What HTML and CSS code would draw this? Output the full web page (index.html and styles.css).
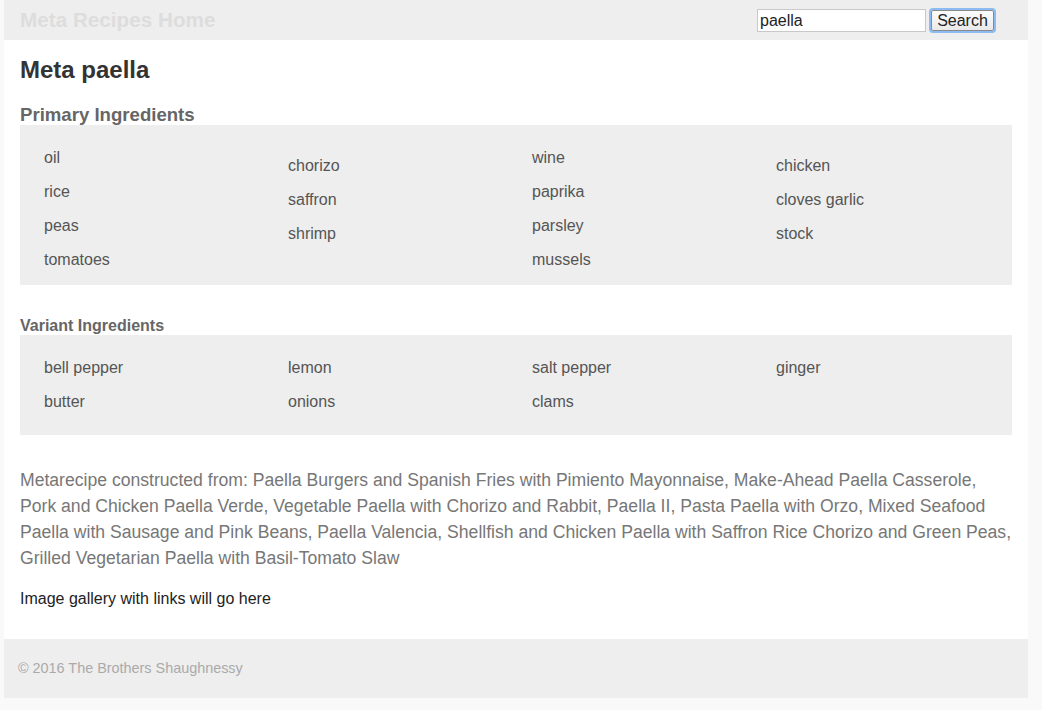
FILE: index.html
```html
<!DOCTYPE html>
<html lang="en">
<head>
<meta charset="utf-8">
<title>Meta paella</title>
<link rel="stylesheet" href="styles.css">
</head>
<body>
<div class="page">
  <header class="topbar">
    <a class="brand" href="#">Meta Recipes Home</a>
    <form class="search">
      <input class="search-input" type="text" value="paella">
      <button class="search-btn" type="button">Search</button>
    </form>
  </header>
  <main class="content">
    <h1 class="title">Meta paella</h1>
    <h2 class="section-primary">Primary Ingredients</h2>
    <div class="ingredients ingredients-primary">
      <ul class="col">
        <li>oil</li><li>rice</li><li>peas</li><li>tomatoes</li>
      </ul>
      <ul class="col col-offset">
        <li>chorizo</li><li>saffron</li><li>shrimp</li>
      </ul>
      <ul class="col">
        <li>wine</li><li>paprika</li><li>parsley</li><li>mussels</li>
      </ul>
      <ul class="col col-offset">
        <li>chicken</li><li>cloves garlic</li><li>stock</li>
      </ul>
    </div>
    <h3 class="section-variant">Variant Ingredients</h3>
    <div class="ingredients ingredients-variant">
      <ul class="col"><li>bell pepper</li><li>butter</li></ul>
      <ul class="col"><li>lemon</li><li>onions</li></ul>
      <ul class="col"><li>salt pepper</li><li>clams</li></ul>
      <ul class="col"><li>ginger</li></ul>
    </div>
    <p class="sources">Metarecipe constructed from: Paella Burgers and Spanish Fries with Pimiento Mayonnaise, Make-Ahead Paella Casserole, Pork and Chicken Paella Verde, Vegetable Paella with Chorizo and Rabbit, Paella II, Pasta Paella with Orzo, Mixed Seafood Paella with Sausage and Pink Beans, Paella Valencia, Shellfish and Chicken Paella with Saffron Rice Chorizo and Green Peas, Grilled Vegetarian Paella with Basil-Tomato Slaw</p>
    <p class="gallery">Image gallery with links will go here</p>
  </main>
  <footer class="footer">© 2016 The Brothers Shaughnessy</footer>
</div>
</body>
</html>
```
FILE: styles.css
```css
html, body {
  margin: 0;
  padding: 0;
}
body {
  background: #f9f9f9;
  font-family: "Liberation Sans", Arial, Helvetica, sans-serif;
  padding-bottom: 12px;
}
.page {
  width: 1024px;
  margin-left: 4px;
  background: #fff;
}
.topbar {
  height: 40px;
  background: #eee;
  display: flex;
  align-items: center;
  justify-content: space-between;
  padding: 0 16px;
}
.brand {
  font-size: 20.7px;
  font-weight: bold;
  color: #ddd;
  text-decoration: none;
  line-height: 24px;
}
.search {
  display: flex;
  align-items: center;
  margin: 0 18px 0 0;
}
.search-input {
  box-sizing: border-box;
  width: 169px;
  height: 23px;
  border: 1px solid #c8c8c8;
  padding: 0 2px;
  margin: 1px 0 0 0;
  font-family: "Liberation Sans", Arial, sans-serif;
  font-size: 16px;
  color: #222;
  background: #fff;
}
.search-btn {
  box-sizing: border-box;
  margin-left: 5px;
  width: 63px;
  height: 21px;
  padding: 0;
  border: 1px solid #8a8a8a;
  border-radius: 2px;
  background: linear-gradient(#fcfcfc, #e9e9e9);
  box-shadow: 0 0 0 2px #8bbbf2;
  font-family: "Liberation Sans", Arial, sans-serif;
  font-size: 16px;
  line-height: 19px;
  color: #222;
}
.content {
  padding: 16px 16px 30px;
}
.title {
  margin: 0;
  font-size: 24px;
  line-height: 28px;
  font-weight: bold;
  color: #333;
}
.section-primary {
  margin: 20px 0 0;
  font-size: 18.6px;
  line-height: 21px;
  font-weight: bold;
  color: #666;
}
.section-variant {
  margin: 31px 0 0;
  font-size: 16px;
  line-height: 19px;
  font-weight: bold;
  color: #666;
}
.ingredients {
  background: #eee;
  display: grid;
  grid-template-columns: repeat(4, 1fr);
  padding: 16px 8px 8px;
}
.ingredients-variant {
  padding-bottom: 16px;
}
.col {
  list-style: none;
  margin: 0;
  padding: 0 0 0 16px;
}
.col-offset {
  margin-top: 8px;
}
.col li {
  font-size: 16px;
  line-height: 34px;
  color: #555;
}
.sources {
  margin: 32px 0 0;
  font-size: 17.6px;
  line-height: 26px;
  color: #777;
}
.gallery {
  margin: 18px 0 0;
  font-size: 16px;
  line-height: 20px;
  color: #222;
}
.footer {
  background: #eee;
  height: 59px;
  box-sizing: border-box;
  padding: 20px 14px;
  font-size: 14.4px;
  line-height: 19px;
  color: #aaa;
}
```
